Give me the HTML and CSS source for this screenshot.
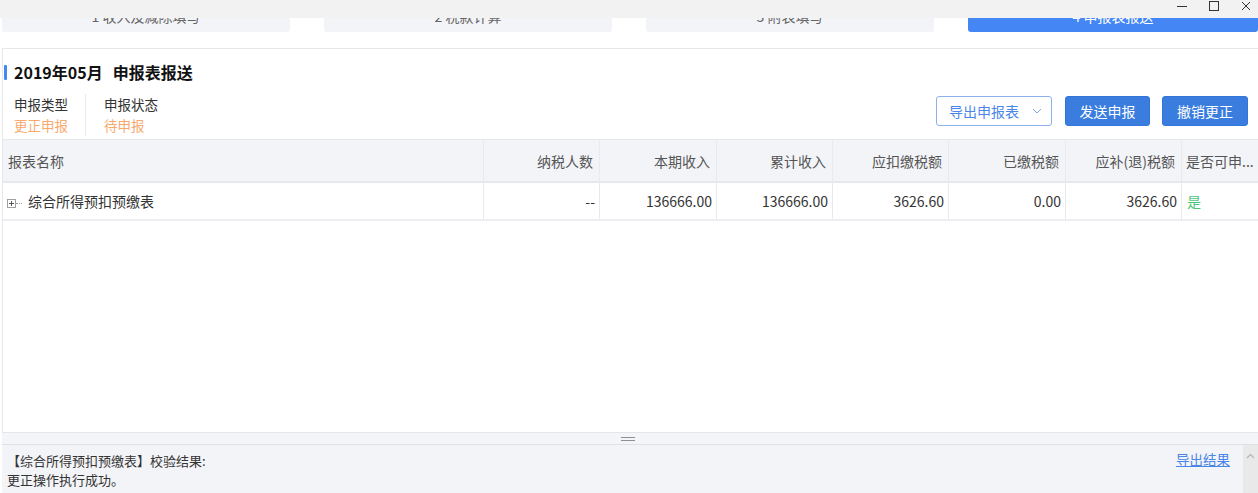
FILE: index.html
```html
<!DOCTYPE html>
<html lang="zh-CN">
<head>
  <meta charset="UTF-8" />
  <title>申报表报送</title>
  <link rel="stylesheet" href="styles.css">
</head>
<body>
  <div class="titlebar">
    <svg class="winbtn" width="12" height="12" viewBox="0 0 12 12"><path d="M1 6.5h10" stroke="#333" stroke-width="1" fill="none"/></svg>
    <svg class="winbtn" width="12" height="12" viewBox="0 0 12 12"><rect x="1.5" y="1.5" width="9" height="9" stroke="#333" stroke-width="1" fill="none"/></svg>
    <svg class="winbtn" width="12" height="12" viewBox="0 0 12 12"><path d="M2 2l8 8M10 2l-8 8" stroke="#333" stroke-width="1" fill="none"/></svg>
  </div>

  <div class="steps">
    <div class="step"><span>1 收入及减除填写</span></div>
    <div class="step"><span>2 税款计算</span></div>
    <div class="step"><span>3 附表填写</span></div>
    <div class="step active"><span>4 申报表报送</span></div>
  </div>

  <div class="main">
    <div class="panel">
      <div class="head">
        <h1 class="title"><i class="mark"></i>2019年05月<span class="sub">申报表报送</span></h1>
        <div class="toolbar">
          <div class="info">
            <div class="info-item">
              <div>申报类型</div>
              <div class="warn">更正申报</div>
            </div>
            <div class="info-item">
              <div>申报状态</div>
              <div class="warn">待申报</div>
            </div>
          </div>
          <div class="actions">
            <button class="btn ghost">导出申报表
              <svg width="10" height="6" viewBox="0 0 10 6"><path d="M1 1l4 4 4-4" stroke="#7ea6e8" stroke-width="1" fill="none"/></svg>
            </button>
            <button class="btn primary">发送申报</button>
            <button class="btn primary wide">撤销更正</button>
          </div>
        </div>
      </div>

      <table class="grid">
        <colgroup>
          <col style="width:481px"><col style="width:116px"><col style="width:117px"><col style="width:116px">
          <col style="width:116px"><col style="width:117px"><col style="width:116px"><col>
        </colgroup>
        <thead>
          <tr>
            <th class="left">报表名称</th>
            <th>纳税人数</th>
            <th>本期收入</th>
            <th>累计收入</th>
            <th>应扣缴税额</th>
            <th>已缴税额</th>
            <th>应补(退)税额</th>
            <th class="left last" title="是否可申报">是否可申...</th>
          </tr>
        </thead>
        <tbody>
          <tr>
            <td class="left"><span class="tree"><i class="plus"></i><i class="dots"></i></span>综合所得预扣预缴表</td>
            <td>--</td>
            <td>136666.00</td>
            <td>136666.00</td>
            <td>3626.60</td>
            <td>0.00</td>
            <td>3626.60</td>
            <td class="left last ok">是</td>
          </tr>
        </tbody>
      </table>
    </div>

    <div class="splitter"><i class="grip"></i></div>

    <div class="result">
      <div class="result-text">
        <div>【综合所得预扣预缴表】校验结果:</div>
        <div>更正操作执行成功。</div>
      </div>
      <a class="link" href="#">导出结果</a>
      <div class="scrollbar">
        <svg width="9" height="6" viewBox="0 0 9 6"><path d="M1 5l3.5-3.5L8 5" stroke="#b5b5b5" stroke-width="1.2" fill="none"/></svg>
      </div>
    </div>
  </div>
</body>
</html>
```

FILE: styles.css
```css
* { box-sizing: border-box; }
body { margin: 0; height: 493px; overflow: hidden; background: #fff; color: #333; font-family: "Noto Sans CJK SC", "Noto Sans", sans-serif; font-size: 14px; display: flex; flex-direction: column; }

.titlebar { height: 18px; background: #f2f2f2; display: flex; justify-content: flex-end; align-items: flex-start; padding-right: 6px; gap: 20px; flex-shrink: 0; }
.winbtn { display: block; }

.steps { height: 14px; overflow: hidden; display: grid; grid-template-columns: 288px 288px 288px 1fr; column-gap: 34px; padding-left: 2px; flex-shrink: 0; }
.step { background: #f3f4f8; border-radius: 0 0 3px 3px; display: flex; justify-content: center; align-items: flex-start; color: #666; font-size: 14px; }
.step span { line-height: 14px; margin-top: -9px; }
.step.active { background: #4386f4; color: #fff; }

.main { flex: 1; display: flex; flex-direction: column; margin: 16px 0 0 2px; }

.panel { height: 384px; border-top: 1px solid #e6e7eb; border-left: 1px solid #e6e7eb; flex-shrink: 0; }
.head { padding: 14px 10px 0 1px; }
.title { margin: 0; font-size: 16px; font-weight: bold; line-height: 18px; color: #111; display: flex; align-items: center; }
.mark { display: block; width: 3px; height: 15px; background: #4386f4; border-radius: 1px; margin-right: 7px; }
.sub { margin-left: 10px; }

.toolbar { display: flex; justify-content: space-between; align-items: flex-start; margin-top: 13px; padding-bottom: 3px; }
.info { display: flex; padding-left: 10px; }
.info-item { line-height: 21px; font-size: 13.5px; color: #333; padding-right: 17px; }
.info-item + .info-item { border-left: 1px solid #ececec; padding-left: 18px; }
.warn { color: #f8aa6e; }

.actions { display: flex; gap: 12px; margin-top: 2px; }
.btn { height: 30px; border-radius: 3px; font-family: inherit; font-size: 14px; padding: 0; cursor: pointer; }
.btn.ghost { width: 116px; background: #fff; border: 1px solid #8cb2ee; color: #4a86e8; display: flex; align-items: center; justify-content: space-between; padding: 0 9px 0 12px; margin-right: 1px; }
.btn.primary { width: 85px; background: #3a7ddf; border: 1px solid #3276da; color: #fff; }
.btn.wide { width: 86px; }

.grid { width: 100%; border-collapse: separate; border-spacing: 0; table-layout: fixed; }
.grid th { height: 44px; background: #f3f4f8; color: #555; font-weight: normal; text-align: right; padding: 0 6px 0 4px; border-top: 1px solid #e7e8ec; border-bottom: 2px solid #e7e8ec; border-right: 1px solid #e9eaee; white-space: nowrap; overflow: hidden; text-overflow: ellipsis; }
.grid td { height: 38px; text-align: right; padding: 0 4px; border-bottom: 2px solid #eceef2; border-right: 1px solid #e9eaee; white-space: nowrap; overflow: hidden; }
.grid .left { text-align: left; padding-left: 5px; }
.grid th.last { padding: 0 0 0 4px; text-overflow: clip; }
.grid .last { border-right: none; }
.ok { color: #4cc479; }

.tree { display: inline-flex; align-items: center; margin: 0 6px 0 -1px; vertical-align: -1px; }
.plus { display: block; width: 9px; height: 9px; border: 1px solid #a0a0a0; background: linear-gradient(#555, #555) center / 5px 1px no-repeat, linear-gradient(#555, #555) center / 1px 5px no-repeat; }
.dots { display: block; width: 6px; border-top: 1px dotted #999; }

.splitter { height: 13px; background: #f4f5f8; border-top: 1px solid #e4e5e9; border-bottom: 1px solid #dfe1e5; display: flex; justify-content: center; align-items: center; flex-shrink: 0; }
.grip { display: block; width: 14px; height: 4px; border-top: 1px solid #8f8f8f; border-bottom: 1px solid #8f8f8f; margin-left: -4px; }

.result { flex: 1; background: #f3f4f8; display: flex; font-size: 13px; }
.result-text { flex: 1; padding: 6px 0 0 5px; line-height: 19px; color: #333; }
.link { color: #4a86e8; text-decoration: underline; font-size: 13.5px; line-height: 18px; margin: 5px 13px 0 0; }
.scrollbar { width: 15px; background: #e9e9ea; display: flex; justify-content: center; align-items: flex-start; padding-top: 8px; }
```
